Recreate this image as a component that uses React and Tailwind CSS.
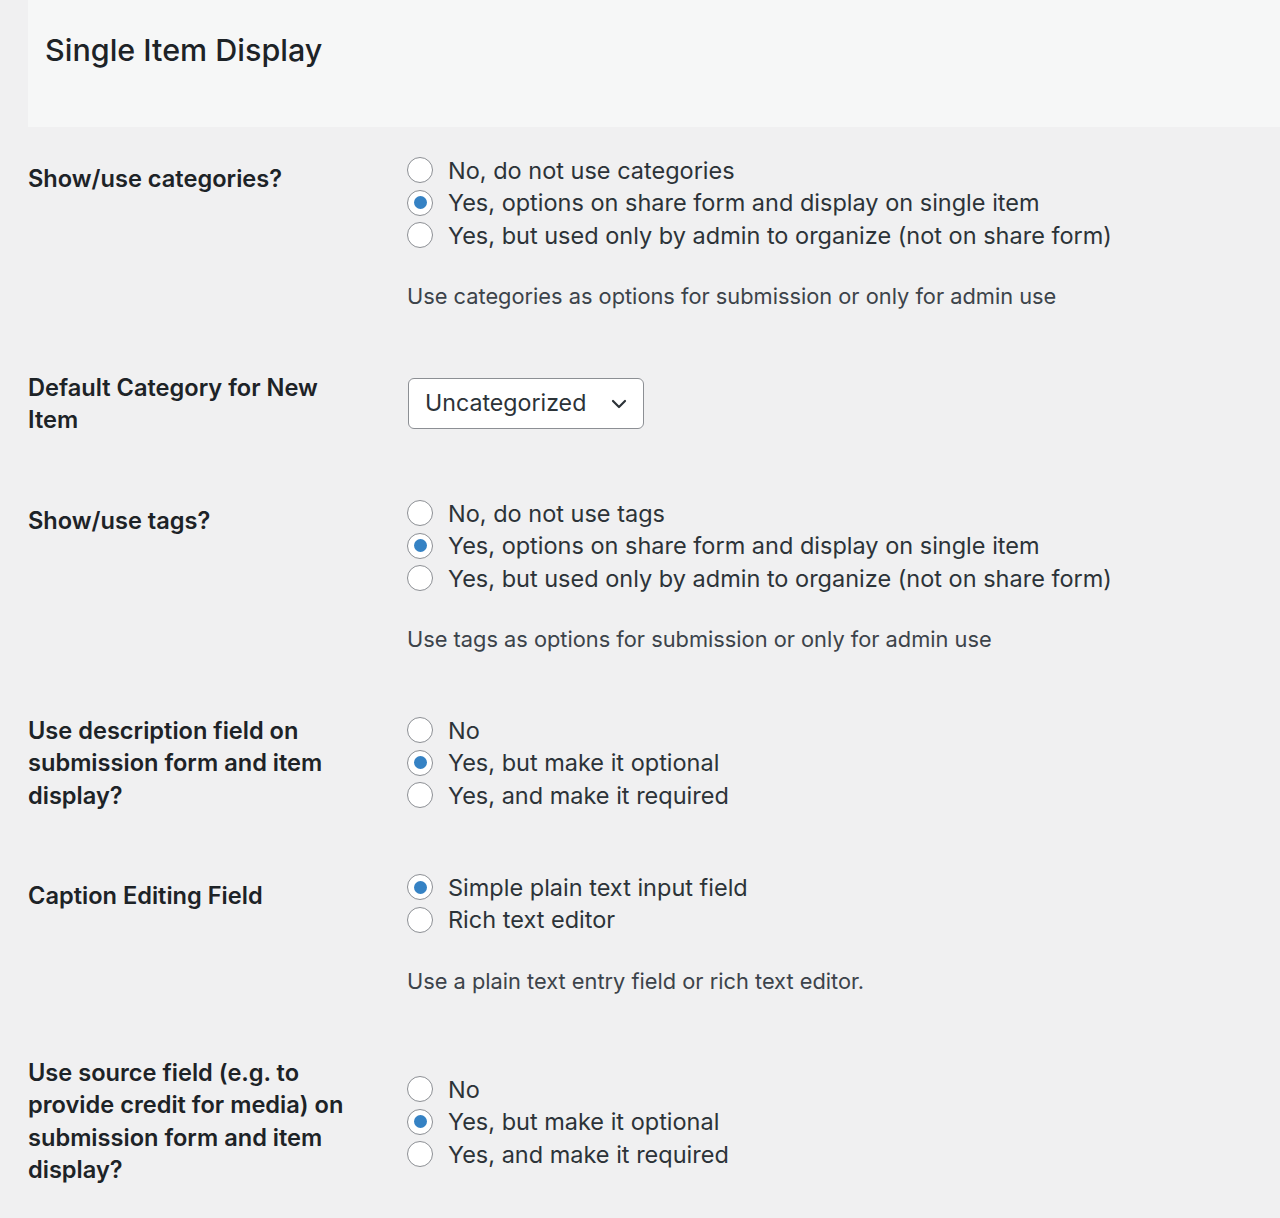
const Radio = ({ checked, label }) => (
  <label className="flex items-center h-[32.5px]">
    <span className="w-[26px] h-[26px] rounded-full border-[1.5px] border-[#8c8f94] bg-white flex items-center justify-center shrink-0">
      {checked && <span className="w-[13px] h-[13px] rounded-full bg-[#3582c4]" />}
    </span>
    <span className="ml-[15px] text-[23.5px] text-[#2c3338] whitespace-nowrap">{label}</span>
  </label>
);

const Options = ({ items, checked }) => (
  <div className="flex flex-col">
    {items.map((item, i) => (
      <Radio key={item} label={item} checked={i === checked} />
    ))}
  </div>
);

const Desc = ({ children, className = '' }) => (
  <p className={`text-[21.8px] leading-[32px] text-[#3c434a] ${className}`}>{children}</p>
);

const Label = ({ children, className = '' }) => (
  <div className={`w-[380px] shrink-0 text-[23.6px] leading-[32.4px] font-semibold text-[#1d2327] ${className}`}>
    <div className="w-[316px]">{children}</div>
  </div>
);

export default function App() {
  return (
    <div className="min-h-[1218px] bg-[#f0f0f1] pl-[28px]" style={{ fontFamily: 'Inter, "Noto Sans", sans-serif' }}>
      <div className="h-[127px] bg-[#f6f7f7] pl-[17px] pt-[30px]">
        <h1 className="text-[30.5px] leading-[40px] font-medium text-[#1d2327]">Single Item Display</h1>
      </div>

      {/* categories */}
      <div className="flex h-[209px]">
        <Label className="pt-[36px]">Show/use categories?</Label>
        <div className="pt-[27px] -ml-[1px]">
          <Options
            checked={1}
            items={[
              'No, do not use categories',
              'Yes, options on share form and display on single item',
              'Yes, but used only by admin to organize (not on share form)',
            ]}
          />
          <Desc className="mt-[28px]">Use categories as options for submission or only for admin use</Desc>
        </div>
      </div>

      {/* default category */}
      <div className="flex h-[133px]">
        <Label className="pt-[36px]">Default Category for New Item</Label>
        <div className="pt-[42px]">
          <div className="w-[236px] h-[51px] rounded-[6px] border-[1.5px] border-[#8c8f94] bg-white flex items-center justify-between pl-[16px] pr-[14px]">
            <span className="text-[23.2px] text-[#2c3338]">Uncategorized</span>
            <svg width="20" height="20" viewBox="0 0 20 20" fill="none" stroke="#2c3338" strokeWidth="2.2" strokeLinecap="round" strokeLinejoin="round">
              <path d="M4 7l6 6 6-6" />
            </svg>
          </div>
        </div>
      </div>

      {/* tags */}
      <div className="flex h-[210px]">
        <Label className="pt-[36px]">Show/use tags?</Label>
        <div className="pt-[28px] -ml-[1px]">
          <Options
            checked={1}
            items={[
              'No, do not use tags',
              'Yes, options on share form and display on single item',
              'Yes, but used only by admin to organize (not on share form)',
            ]}
          />
          <Desc className="mt-[28px]">Use tags as options for submission or only for admin use</Desc>
        </div>
      </div>

      {/* description */}
      <div className="flex h-[165px]">
        <Label className="pt-[36px]">Use description field on submission form and item display?</Label>
        <div className="pt-[35px] -ml-[1px]">
          <Options
            checked={1}
            items={['No', 'Yes, but make it optional', 'Yes, and make it required']}
          />
        </div>
      </div>

      {/* caption */}
      <div className="flex h-[177px]">
        <Label className="pt-[36px]">Caption Editing Field</Label>
        <div className="pt-[27px] -ml-[1px]">
          <Options checked={0} items={['Simple plain text input field', 'Rich text editor']} />
          <Desc className="mt-[29px]">Use a plain text entry field or rich text editor.</Desc>
        </div>
      </div>

      {/* source */}
      <div className="flex">
        <Label className="pt-[36px]">Use source field (e.g. to provide credit for media) on submission form and item display?</Label>
        <div className="pt-[52px] -ml-[1px]">
          <Options
            checked={1}
            items={['No', 'Yes, but make it optional', 'Yes, and make it required']}
          />
        </div>
      </div>
    </div>
  );
}
